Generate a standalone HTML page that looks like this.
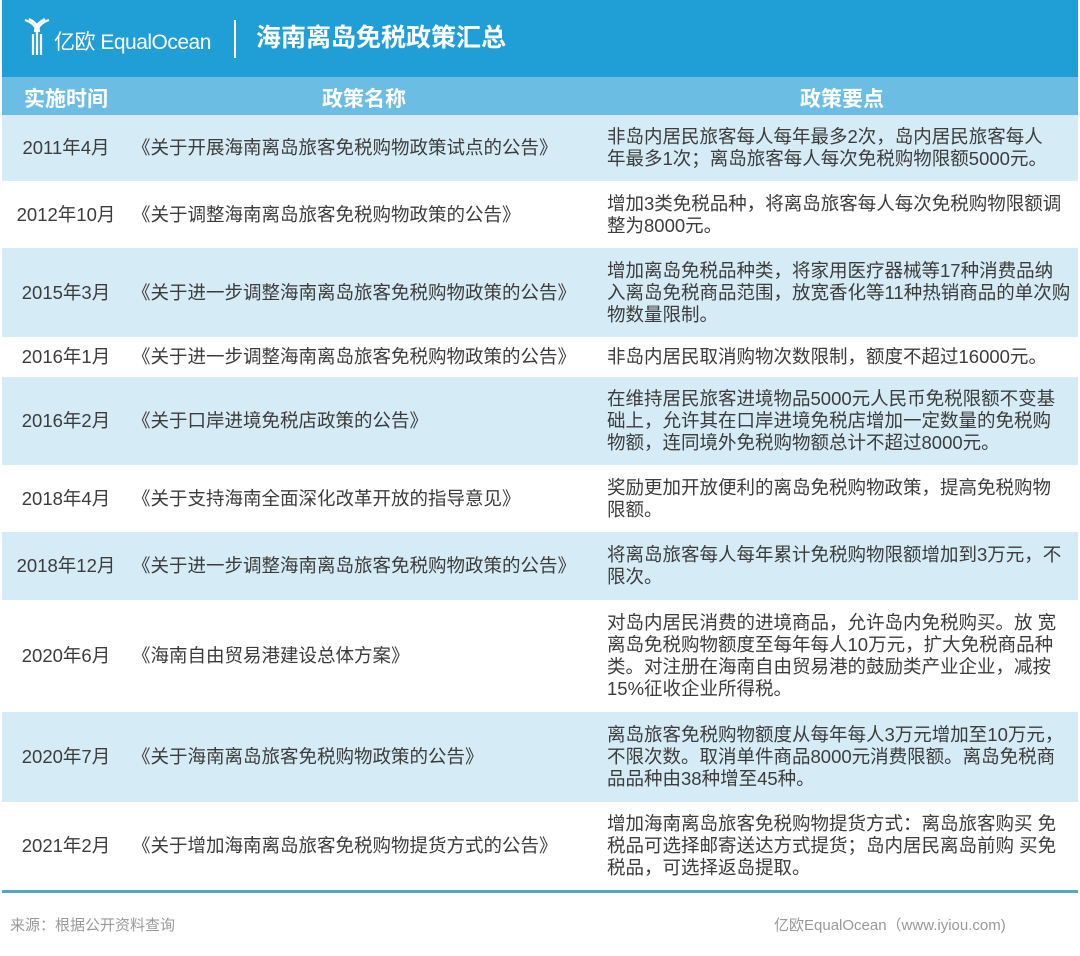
<!DOCTYPE html>
<html><head><meta charset="utf-8"><style>
*{margin:0;padding:0;box-sizing:border-box}
body{width:1080px;height:956px;background:#fff;font-family:"Liberation Sans","Noto Sans CJK SC",sans-serif;position:relative;overflow:hidden;color:#3c3c3c}
.top{position:absolute;left:2px;top:0;width:1076px;height:77px;background:#209ed6}
.hdr{position:absolute;left:2px;top:77px;width:1076px;height:38px;background:#6cbde3;color:#fff;font-weight:bold;font-size:21px}
.row{position:absolute;left:2px;width:1076px;font-size:18.5px;line-height:22px}
.row.b{background:#d5ebf5}
.c1{position:absolute;left:0;width:128px;text-align:center;top:50%;transform:translateY(-50%)}
.c2{position:absolute;left:130px;top:50%;transform:translateY(-50%);white-space:nowrap}
.c3{position:absolute;left:605px;top:50%;transform:translateY(-50%);white-space:nowrap}
</style></head><body>
<div class="top">
<svg style="position:absolute;left:22px;top:18px" width="26" height="38" viewBox="0 0 26 38"><path d="M1 2 Q13 6 13 16 V37 M5 1 Q15 6 15 14 M25 2 Q13 6 13 16 M21 1 Q11 6 11 14 M9 16 V37 M17 16 V37" stroke="#fff" stroke-width="2.2" fill="none"/></svg>
<div style="position:absolute;left:52px;top:30px;color:#fff;font-size:21px;line-height:26px;letter-spacing:-0.5px">亿欧 EqualOcean</div>
<div style="position:absolute;left:232px;top:20px;width:2px;height:38px;background:#fff"></div>
<div style="position:absolute;left:254px;top:22px;color:#fff;font-size:25px;font-weight:bold;line-height:32px">海南离岛免税政策汇总</div>
</div>
<div class="hdr"><span style="position:absolute;left:22px;top:6px">实施时间</span><span style="position:absolute;left:320px;top:6px">政策名称</span><span style="position:absolute;left:798px;top:6px">政策要点</span></div>
<div class="row b" style="top:115px;height:66px"><div class="c1">2011年4月</div><div class="c2">《关于开展海南离岛旅客免税购物政策试点的公告》</div><div class="c3">非岛内居民旅客每人每年最多2次，岛内居民旅客每人<br>年最多1次；离岛旅客每人每次免税购物限额5000元。</div></div>
<div class="row" style="top:181px;height:67px"><div class="c1">2012年10月</div><div class="c2">《关于调整海南离岛旅客免税购物政策的公告》</div><div class="c3">增加3类免税品种，将离岛旅客每人每次免税购物限额调<br>整为8000元。</div></div>
<div class="row b" style="top:248px;height:89px"><div class="c1">2015年3月</div><div class="c2">《关于进一步调整海南离岛旅客免税购物政策的公告》</div><div class="c3">增加离岛免税品种类，将家用医疗器械等17种消费品纳<br>入离岛免税商品范围，放宽香化等11种热销商品的单次购<br>物数量限制。</div></div>
<div class="row" style="top:337px;height:40px"><div class="c1">2016年1月</div><div class="c2">《关于进一步调整海南离岛旅客免税购物政策的公告》</div><div class="c3">非岛内居民取消购物次数限制，额度不超过16000元。</div></div>
<div class="row b" style="top:377px;height:88px"><div class="c1">2016年2月</div><div class="c2">《关于口岸进境免税店政策的公告》</div><div class="c3">在维持居民旅客进境物品5000元人民币免税限额不变基<br>础上，允许其在口岸进境免税店增加一定数量的免税购<br>物额，连同境外免税购物额总计不超过8000元。</div></div>
<div class="row" style="top:465px;height:67px"><div class="c1">2018年4月</div><div class="c2">《关于支持海南全面深化改革开放的指导意见》</div><div class="c3">奖励更加开放便利的离岛免税购物政策，提高免税购物<br>限额。</div></div>
<div class="row b" style="top:532px;height:68px"><div class="c1">2018年12月</div><div class="c2">《关于进一步调整海南离岛旅客免税购物政策的公告》</div><div class="c3">将离岛旅客每人每年累计免税购物限额增加到3万元，不<br>限次。</div></div>
<div class="row" style="top:600px;height:112px"><div class="c1">2020年6月</div><div class="c2">《海南自由贸易港建设总体方案》</div><div class="c3">对岛内居民消费的进境商品，允许岛内免税购买。放 宽<br>离岛免税购物额度至每年每人10万元，扩大免税商品种<br>类。对注册在海南自由贸易港的鼓励类产业企业，减按<br>15%征收企业所得税。</div></div>
<div class="row b" style="top:712px;height:90px"><div class="c1">2020年7月</div><div class="c2">《关于海南离岛旅客免税购物政策的公告》</div><div class="c3">离岛旅客免税购物额度从每年每人3万元增加至10万元，<br>不限次数。取消单件商品8000元消费限额。离岛免税商<br>品品种由38种增至45种。</div></div>
<div class="row" style="top:802px;height:88px"><div class="c1">2021年2月</div><div class="c2">《关于增加海南离岛旅客免税购物提货方式的公告》</div><div class="c3">增加海南离岛旅客免税购物提货方式：离岛旅客购买 免<br>税品可选择邮寄送达方式提货；岛内居民离岛前购 买免<br>税品，可选择返岛提取。</div></div>
<div style="position:absolute;left:2px;top:890px;width:1076px;height:3px;background:#4fa9c9"></div>
<div style="position:absolute;left:10px;top:914px;font-size:15px;color:#999">来源：根据公开资料查询</div>
<div style="position:absolute;left:774px;top:914px;font-size:15px;color:#999">亿欧EqualOcean（www.iyiou.com)</div>
</body></html>
